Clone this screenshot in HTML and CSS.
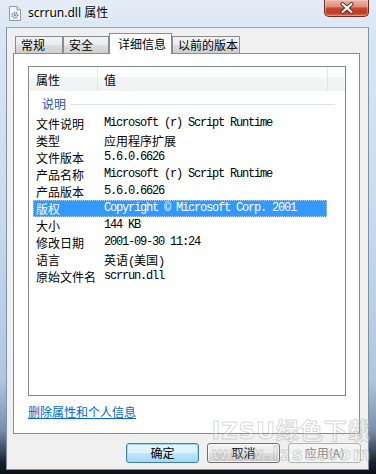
FILE: index.html
```html
<!DOCTYPE html>
<html lang="zh-CN">
<head>
<meta charset="utf-8">
<title>scrrun.dll 属性</title>
<link rel="stylesheet" href="styles.css">
</head>
<body>
<div class="window">
  <div class="titlebar">
    <svg class="app-icon" width="12" height="15" viewBox="0 0 12 15">
      <path d="M0.5 0.5 H8 L11.5 4 V14.5 H0.5 Z" fill="#f4f6f8" stroke="#8c9aa9"/>
      <path d="M8 0.5 V4 H11.5" fill="#dfe6ee" stroke="#8c9aa9"/>
      <circle cx="5.8" cy="9.2" r="2.7" fill="none" stroke="#6f87a6" stroke-width="1.6" stroke-dasharray="1.3 0.9"/>
      <circle cx="5.8" cy="9.2" r="1.1" fill="#6f87a6"/>
    </svg>
    <span class="title">scrrun.dll 属性</span>
    <div class="close">
      <svg width="16" height="12" viewBox="0 0 16 12">
        <path d="M3.5 2 L12.5 10 M12.5 2 L3.5 10" stroke="#5b2a22" stroke-width="4" stroke-linecap="round"/>
        <path d="M3.5 2 L12.5 10 M12.5 2 L3.5 10" stroke="#ffffff" stroke-width="2.2" stroke-linecap="round"/>
      </svg>
    </div>
  </div>
  <div class="client">
    <div class="tabs">
      <div class="tab tab-general">常规</div>
      <div class="tab tab-security">安全</div>
      <div class="tab tab-details active">详细信息</div>
      <div class="tab tab-prev">以前的版本</div>
    </div>
    <div class="panel">
      <div class="list">
        <div class="lv-header">
          <div class="hcol hcol-name">属性</div>
          <div class="hcol hcol-value">值</div>
          <div class="hcol hcol-fill"></div>
        </div>
        <div class="group"><span class="group-label">说明</span><span class="group-line"></span></div>
        <div class="row"><span class="k">文件说明</span><span class="v mono">Microsoft (r) Script Runtime</span></div>
        <div class="row"><span class="k">类型</span><span class="v">应用程序扩展</span></div>
        <div class="row"><span class="k">文件版本</span><span class="v mono">5.6.0.6626</span></div>
        <div class="row"><span class="k">产品名称</span><span class="v mono">Microsoft (r) Script Runtime</span></div>
        <div class="row"><span class="k">产品版本</span><span class="v mono">5.6.0.6626</span></div>
        <div class="row selected"><span class="k">版权</span><span class="v mono">Copyright © Microsoft Corp. 2001</span></div>
        <div class="row"><span class="k">大小</span><span class="v mono">144 KB</span></div>
        <div class="row"><span class="k">修改日期</span><span class="v mono">2001-09-30 11:24</span></div>
        <div class="row"><span class="k">语言</span><span class="v">英语<span class="paren">(</span>美国<span class="paren">)</span></span></div>
        <div class="row"><span class="k">原始文件名</span><span class="v mono">scrrun.dll</span></div>
      </div>
      <a class="link" href="#">删除属性和个人信息</a>
    </div>
    <div class="buttons">
      <div class="btn default">确定</div>
      <div class="btn">取消</div>
      <div class="btn disabled">应用(A)</div>
    </div>
  </div>
  <div class="watermark">
    <div class="wm-top">lZSU绿色下载</div>
    <div class="wm-bottom">www.lzsu.com</div>
  </div>
</div>
</body>
</html>
```
FILE: styles.css
```css
html, body {
  margin: 0;
  padding: 0;
}
body {
  width: 376px;
  height: 474px;
  overflow: hidden;
  font-family: "Noto Sans CJK SC", "Noto Sans", sans-serif;
  font-size: 12px;
  color: #000;
}
.window {
  position: relative;
  width: 376px;
  height: 474px;
  box-sizing: border-box;
  padding: 0 7px 4px 6px;
  display: flex;
  flex-direction: column;
  background: linear-gradient(180deg, #e4edf7 0px, #d9e7f4 30px, #cbdcee 200px, #adc7e2 380px, #7890ab 430px, #1a232d 462px, #0b0f13 474px);
}
.titlebar {
  height: 27px;
  display: flex;
  align-items: flex-start;
  padding-left: 3px;
}
.app-icon {
  margin-top: 6px;
  margin-right: 7px;
  flex: none;
}
.title {
  margin-top: 4px;
  line-height: 18px;
  font-family: "Noto Sans", "Noto Sans CJK SC", sans-serif;
  font-size: 12px;
  color: #000;
  text-shadow: 0 0 6px #fff, 0 0 3px #fff;
}
.close {
  margin-left: auto;
  width: 45px;
  height: 17px;
  box-sizing: border-box;
  border: 1px solid #6d2b20;
  border-top: none;
  border-radius: 0 0 5px 5px;
  background: linear-gradient(180deg, #edb6a8 0%, #df8e7a 42%, #c84a30 50%, #bf3c22 78%, #d8644a 100%);
  box-shadow: inset 0 0 0 1px rgba(255, 210, 200, 0.45);
  display: flex;
  align-items: center;
  justify-content: center;
}
.client {
  flex: 1;
  background: #f0f0f0;
  border: 1px solid #7f90a5;
  border-top-color: #9aa8b8;
  display: flex;
  flex-direction: column;
}
.tabs {
  display: flex;
  align-items: flex-end;
  height: 20px;
  margin: 5px 0 0 8px;
  position: relative;
  z-index: 2;
}
.tab {
  box-sizing: border-box;
  height: 17px;
  border: 1px solid #898c95;
  border-bottom: none;
  background: linear-gradient(180deg, #f3f3f3 0%, #ebebeb 48%, #dddddd 52%, #cfcfcf 100%);
  padding-left: 5px;
  line-height: 16px;
  white-space: nowrap;
}
.tab-general { width: 48px; }
.tab-security { width: 46px; }
.tab-details { width: 63px; }
.tab-prev { width: 68px; }
.tab.active {
  height: 21px;
  margin-bottom: -1px;
  background: #fff;
  padding-left: 8px;
  line-height: 19px;
}
.panel {
  box-sizing: border-box;
  width: 347px;
  height: 381px;
  margin-left: 6px;
  border: 1px solid #898c95;
  background: #fff;
  padding: 12px 0 0 14px;
  display: flex;
  flex-direction: column;
  align-items: flex-start;
}
.list {
  box-sizing: border-box;
  width: 318px;
  height: 330px;
  border: 1px solid #828790;
  background: #fff;
  flex: none;
}
.lv-header {
  display: flex;
  height: 24px;
  background: linear-gradient(180deg, #ffffff 0%, #ffffff 42%, #f4f5f7 44%, #f1f2f4 100%);
}
.hcol {
  box-sizing: border-box;
  height: 24px;
  line-height: 26px;
  border-right: 1px solid #e2e4e8;
}
.hcol-name { width: 69px; padding-left: 7px; }
.hcol-value { width: 230px; padding-left: 6px; }
.hcol-fill { flex: 1; border-right: none; }
.group {
  height: 24px;
  display: flex;
  align-items: center;
  padding-left: 13px;
  padding-right: 10px;
}
.group-label {
  color: #1e4fb4;
  line-height: 17px;
  margin-top: 1px;
}
.group-line {
  flex: 1;
  height: 1px;
  margin-left: 5px;
  margin-top: 2px;
  background: #dbe4ef;
}
.row {
  display: flex;
  width: 294px;
  height: 17px;
  margin-left: 4px;
  box-sizing: border-box;
  padding-left: 3px;
  line-height: 17px;
  white-space: nowrap;
}
.row.selected {
  background: #3399ff;
  color: #fff;
  outline: 1px dotted #a9d1ff;
  outline-offset: -1px;
}
.k {
  width: 68px;
  flex: none;
}
.v {
  flex: none;
}
.mono {
  font-family: "Liberation Mono", "Noto Sans CJK SC", monospace;
  font-size: 12px;
  letter-spacing: -1.2px;
}
.paren {
  font-family: "Liberation Mono", monospace;
  letter-spacing: -1.2px;
}
.link {
  margin-top: 8px;
  line-height: 16px;
  color: #0066cc;
  text-decoration: underline;
}
.buttons {
  display: flex;
  justify-content: flex-end;
  gap: 8px;
  margin-top: 9px;
  padding-right: 7px;
}
.btn {
  box-sizing: border-box;
  width: 73px;
  height: 20px;
  border: 1px solid #707070;
  border-radius: 3px;
  background: linear-gradient(180deg, #f2f2f2 0%, #ebebeb 48%, #dddddd 52%, #cfcfcf 100%);
  box-shadow: inset 0 0 0 1px rgba(255, 255, 255, 0.7);
  text-align: center;
  line-height: 18px;
}
.btn.default {
  border-color: #3c7fb1;
  background: linear-gradient(180deg, #eaf6fd 0%, #d9f0fc 48%, #bee6fd 52%, #a7d9f5 100%);
  box-shadow: inset 0 0 0 1px #9edaf8;
}
.btn.disabled {
  border-color: #adb2b5;
  background: #f4f4f4;
  box-shadow: none;
  color: #8a8a8a;
}
.watermark {
  position: absolute;
  left: 212px;
  top: 419px;
  pointer-events: none;
  font-family: "DejaVu Sans", "Noto Sans CJK SC", sans-serif;
  font-weight: bold;
  color: rgba(255, 255, 255, 0.25);
  -webkit-text-stroke: 1px rgba(140, 140, 140, 0.35);
}
.wm-top {
  font-size: 23px;
  line-height: 25px;
  letter-spacing: 1px;
  white-space: nowrap;
}
.wm-bottom {
  font-size: 17px;
  line-height: 20px;
  letter-spacing: 2px;
  white-space: nowrap;
}
```
